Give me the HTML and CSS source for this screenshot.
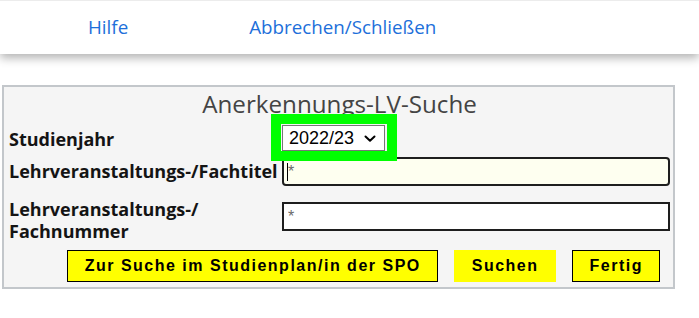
FILE: index.html
```html
<!DOCTYPE html>
<html lang="de">
<head>
<meta charset="utf-8">
<title>Anerkennungs-LV-Suche</title>
<link rel="stylesheet" href="styles.css">
</head>
<body>
<header class="topbar">
  <a class="toplink link-help" href="#">Hilfe</a>
  <a class="toplink link-close" href="#">Abbrechen/Schließen</a>
</header>
<main class="panel">
  <h1 class="title">Anerkennungs-LV-Suche</h1>
  <div class="row row-year">
    <label class="label" for="jahr">Studienjahr</label>
    <span class="select-wrap">
      <select id="jahr" class="select">
        <option>2022/23</option>
      </select>
      <svg class="chevron" width="12" height="8" viewBox="0 0 12 8" aria-hidden="true">
        <path d="M1.5 1.5 L6 5.8 L10.5 1.5" fill="none" stroke="#000" stroke-width="2" stroke-linecap="round" stroke-linejoin="round"/>
      </svg>
    </span>
  </div>
  <div class="row row-title">
    <label class="label" for="titel">Lehrveranstaltungs-/Fachtitel</label>
    <span class="input-wrap">
      <input id="titel" class="input input-focus" type="text" placeholder="*">
      <span class="caret"></span>
    </span>
  </div>
  <div class="row row-number">
    <label class="label label-two" for="nummer">Lehrveranstaltungs-/<br>Fachnummer</label>
    <input id="nummer" class="input input-plain" type="text" placeholder="*">
  </div>
  <div class="buttons">
    <button class="btn btn-border" type="button">Zur Suche im Studienplan/in der SPO</button>
    <button class="btn btn-plain" type="button">Suchen</button>
    <button class="btn btn-border" type="button">Fertig</button>
  </div>
</main>
</body>
</html>
```
FILE: styles.css
```css
html, body {
  margin: 0;
  padding: 0;
  background: #ffffff;
}

body {
  font-family: "Open Sans", "Liberation Sans", sans-serif;
  width: 699px;
  height: 318px;
  overflow: hidden;
}

.topbar {
  height: 54px;
  box-sizing: border-box;
  border-top: 1px solid #ececec;
  background: #ffffff;
  box-shadow: 0 4px 9px rgba(0, 0, 0, 0.3);
  display: flex;
  align-items: center;
  position: relative;
  z-index: 2;
}

.toplink {
  font-family: "Open Sans", sans-serif;
  font-size: 18.8px;
  color: #1d6fda;
  text-decoration: none;
  line-height: 24px;
  margin-top: -2px;
}

.link-help {
  margin-left: 88px;
}

.link-close {
  margin-left: 121px;
}

.panel {
  margin: 31px 0 0 2px;
  width: 673px;
  box-sizing: border-box;
  border: 2px solid #c3c7cb;
  background: #f5f5f5;
  padding: 2px 3px 5px 5px;
}

.title {
  margin: 0;
  font-size: 24.2px;
  font-weight: 400;
  line-height: 30px;
  color: #444444;
  text-align: center;
}

.row {
  display: flex;
}

.label {
  width: 273px;
  flex: none;
  font-size: 18px;
  font-weight: 700;
  color: #141414;
}

.row-year {
  margin-top: 4px;
  height: 30px;
  align-items: center;
}

.row-year .label {
  line-height: 28px;
  padding-top: 2px;
}

.row-title {
  margin-top: 2px;
  height: 33px;
  align-items: center;
}

.row-title .label {
  line-height: 33px;
}

.row-number {
  margin-top: 10px;
  align-items: flex-start;
}

.label-two {
  line-height: 22px;
}

.select-wrap {
  position: relative;
  display: inline-block;
  height: 26px;
}

.select-wrap::after {
  content: "";
  position: absolute;
  top: -11px;
  left: -11px;
  right: -12px;
  bottom: -10px;
  border: 10px solid #00ff00;
  pointer-events: none;
  z-index: 3;
}

.select {
  -webkit-appearance: none;
  appearance: none;
  width: 103px;
  height: 26px;
  box-sizing: border-box;
  border: 1px solid #767676;
  border-radius: 0;
  background: #ffffff;
  font-family: "Liberation Sans", Arial, sans-serif;
  font-size: 18px;
  color: #000000;
  padding: 0 0 0 6px;
  margin: 0;
  display: block;
}

.chevron {
  position: absolute;
  left: 82px;
  top: 10px;
  pointer-events: none;
}

.input-wrap {
  position: relative;
  display: block;
  width: 388px;
  height: 29px;
}

.input {
  width: 388px;
  height: 29px;
  box-sizing: border-box;
  border: 2px solid #1e1e1e;
  font-family: "Liberation Sans", Arial, sans-serif;
  font-size: 16px;
  padding: 0 4px;
  margin: 0;
  outline: none;
  display: block;
}

.input::placeholder {
  color: #6a6a6a;
}

.input-focus {
  background: #fefff0;
  border-radius: 4px;
}

.input-plain {
  background: #ffffff;
  border-radius: 0;
  margin-top: 4px;
}

.caret {
  position: absolute;
  left: 5px;
  top: 6px;
  width: 1px;
  height: 18px;
  background: #000000;
}

.buttons {
  margin-top: 8px;
  display: flex;
  justify-content: flex-end;
  gap: 16px;
  padding-right: 10px;
}

.btn {
  height: 32px;
  box-sizing: border-box;
  padding: 0 16px 0 17px;
  background: #ffff00;
  font-family: "Liberation Sans", Arial, sans-serif;
  font-size: 16px;
  font-weight: 700;
  letter-spacing: 1.5px;
  color: #000000;
  margin: 0;
  cursor: pointer;
}

.btn-border {
  border: 1px solid #000000;
}

.btn-plain {
  border: 1px solid #ffff00;
}
```
